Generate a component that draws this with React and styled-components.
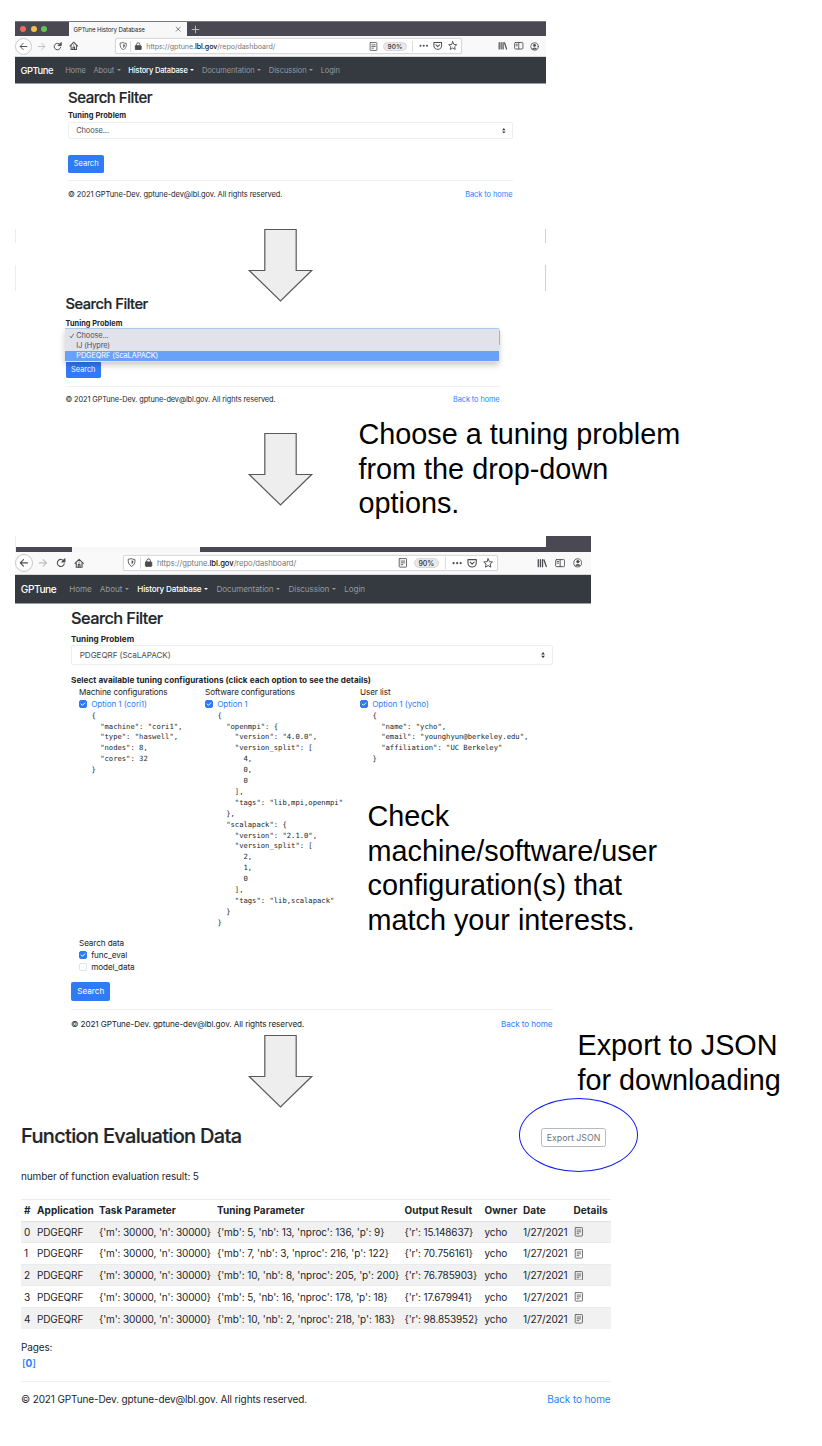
import React from 'react';
import styled, { createGlobalStyle, css } from 'styled-components';

const Global = createGlobalStyle`
  * { box-sizing: border-box; }
  body { margin: 0; background: #fff; }
`;
const Page = styled.main`
  position: relative; width: 822px; height: 1446px; overflow: hidden; padding-top: 21px;
  font-family: Inter, "Liberation Sans", sans-serif; color: #212529; background: #fff;
`;
const Stage = styled.section`
  height: ${p => p.$h}px;
`;

/* ---------- browser window ---------- */
const Browser = styled.div`
  margin-left: 15px; width: ${p => p.$w}px; font-size: ${p => p.$em}px;
`;
const TabStrip = styled.div`
  display: flex; height: 15px; background: #4a4852; border-top: 1px solid #77757d; padding-left: 5px; align-items: center;
`;
const Lights = styled.div`display: flex; gap: 4.6px; width: 49px;`;
const Light = styled.i`width: 6px; height: 6px; border-radius: 50%; background: ${p => p.$c};`;
const Tab = styled.div`
  display: flex; align-items: center; justify-content: space-between; width: 117.5px; height: 14px; padding: 0 5px 0 4.5px;
  background: #f8f8f9; font-size: 6.1px; letter-spacing: -.02em; color: #222; white-space: nowrap;
`;
const NewTab = styled.div`margin-left: 4px; display: flex;`;
const CutStrip = styled.div`
  display: grid; grid-template-columns: 56px 128px 346px 45px; height: 16px; align-items: end; border-left: 1px solid #eee;
`;
const CutPart = styled.i`height: ${p => p.$h}px; background: ${p => (p.$light ? '#f8f8f9' : '#4a4852')};`;
const Toolbar = styled.div`
  display: flex; align-items: center; height: 2.13em; background: #f9f9fa; border-bottom: 1px solid #d8d8da;
`;
const Back = styled.div`
  display: grid; place-items: center; width: 1.7em; height: 1.7em; border: 1px solid #c9c9cb; border-radius: 50%; background: #fff;
`;
const NavIcons = styled.div`display: flex; align-items: center; gap: .72em; margin-left: .45em; width: 7.8em;`;
const Url = styled.div`
  display: flex; align-items: center; width: 34.7em; height: 1.55em; padding: 0 .35em 0 .33em; border: 1px solid #dadadc; border-radius: 2px; background: #fff;
  box-shadow: 0 0 1px #ccc; color: #77777b;
`;
const UrlText = styled.span`
  font-size: .71em; letter-spacing: -.008em; margin-left: .5em; flex: 1; white-space: nowrap;
  b { font-weight: 500; color: #111; }
`;
const Divider = styled.i`width: 1px; height: 1.1em; background: #ddd; margin: 0 ${p => p.$m}em;`;
const Pill = styled.span`
  display: grid; place-items: center; width: 3.55em; height: 1.35em; margin-left: .85em; border-radius: 1em; background: #e9e9eb; border: 1px solid #d8d8da;
  font-size: .65em; font-weight: 500; color: #333;
`;
const UrlActions = styled.div`display: flex; align-items: center; gap: .5em;`;
const RightIcons = styled.div`display: flex; align-items: center; gap: .68em; margin-left: auto; margin-right: ${p => p.$r}em;`;
const Svg = styled.svg`
  width: ${p => p.$s || 1}em; height: ${p => p.$s || 1}em; display: block; flex: none;
  fill: none; stroke: ${p => p.$c || '#4c4c50'}; stroke-width: ${p => p.$k || 1.7}; stroke-linecap: round; stroke-linejoin: round;
`;
const Navbar = styled.nav`
  display: flex; align-items: center; height: 2.7em; padding-left: .54em; background: #343a40; border-bottom: 1px solid #9a9da0; color: #97999d;
`;
const Brand = styled.span`font-size: .94em; font-weight: 500; color: #fff; width: 4.76em; letter-spacing: -.045em;`;
const NavItem = styled.span`
  display: flex; align-items: center; font-size: .75em; margin-right: 1.02em; white-space: nowrap; letter-spacing: -.012em;
  ${p => p.$active && css`color: #fff; font-weight: 500; letter-spacing: -.02em;`}
`;
const Caret = styled.i`
  margin-left: .34em; border: .27em solid transparent; border-top-color: currentColor; border-bottom: 0;
`;

const I = {
  back: <path d="M14 8H2.5M7.5 2.5 2 8l5.5 5.5" />,
  fwd: <path d="M2 8h11.5M8.5 2.5 14 8l-5.5 5.5" />,
  reload: <><path d="M13.3 9.5A5.7 5.7 0 1 1 12.5 4.7" /><path d="M14.3 1.5v4.8H9.5z" fill="#4c4c50" /></>,
  home: <><path d="M1.5 8.5 8 2l6.5 6.5" /><path d="M3.5 8v6.3h9V8" /><path d="M6.7 14v-4h2.6v4M8 6.3v.4" /></>,
  shield: <><path d="M8 1.3 14 3c0 6-1.5 9.5-6 11.7C3.5 12.5 2 9 2 3z" /><path d="M8 4.3v7.2c2-1.5 2.9-3.5 3.1-6.5z" fill="#4c4c50" stroke="none" /></>,
  lock: <><rect x="2.5" y="7" width="11" height="7.5" rx="1" fill="#4c4c50" /><path d="M4.8 7V4.8a3.2 3.2 0 0 1 6.4 0V7" /></>,
  reader: <><rect x="2" y="1" width="12" height="14" rx="1" /><path d="M5 5h6M5 8h6M5 11h3" /></>,
  dots: <g fill="#4c4c50" stroke="none"><circle cx="2.5" cy="8" r="1.7" /><circle cx="8" cy="8" r="1.7" /><circle cx="13.5" cy="8" r="1.7" /></g>,
  pocket: <><path d="M1.5 2.5h13v5a6.5 6.5 0 0 1-13 0z" /><path d="m5 6.5 3 3 3-3" /></>,
  star: <path d="m8 1.3 2 4.4 4.8.5-3.6 3.2 1 4.8L8 11.8l-4.2 2.4 1-4.8L1.2 6.2 6 5.7z" />,
  library: <path d="M2 2.5v11M5.3 2.5v11M8.6 2.5v11M11 3l3.5 10.5" strokeWidth="2" />,
  sidebar: <><rect x="1" y="2.5" width="14" height="11" rx="1.5" /><path d="M8 2.5v11M3.5 5.5h2M3.5 8h2" /></>,
  account: <><circle cx="8" cy="8" r="6.7" /><circle cx="8" cy="6" r="2" fill="#4c4c50" /><path d="M4.5 12c.5-2 6.5-2 7 0z" fill="#4c4c50" /></>,
  plus: <path d="M8 2v12M2 8h12" />,
  close: <path d="m3 3 10 10M13 3 3 13" />,
};
const Icon = ({ n, s, c, k }) => <Svg viewBox="0 0 16 16" $s={s} $c={c} $k={k}>{I[n]}</Svg>;

const Chrome = ({ right }) => (
  <Toolbar>
    <Back><Icon n="back" s={0.9} /></Back>
    <NavIcons>
      <Icon n="fwd" s={0.9} c="#bbb" /><Icon n="reload" s={0.92} /><Icon n="home" s={0.95} />
    </NavIcons>
    <Url>
      <Icon n="shield" s={0.85} k={1.5} /><Divider $m={0.3} /><Icon n="lock" s={0.85} />
      <UrlText>https://gptune.<b>lbl.gov</b>/repo/dashboard/</UrlText>
      <Icon n="reader" s={0.9} k={1.4} />
      <Pill>90%</Pill>
      <Divider $m={0.55} />
      <UrlActions><Icon n="dots" s={0.95} /><Icon n="pocket" s={0.95} /><Icon n="star" s={0.95} k={1.5} /></UrlActions>
    </Url>
    <RightIcons $r={right}><Icon n="library" s={0.95} /><Icon n="sidebar" s={0.95} k={1.4} /><Icon n="account" s={0.9} k={1.4} /></RightIcons>
  </Toolbar>
);
const SiteNav = () => (
  <Navbar>
    <Brand>GPTune</Brand>
    <NavItem>Home</NavItem>
    <NavItem>About<Caret /></NavItem>
    <NavItem $active>History Database<Caret /></NavItem>
    <NavItem>Documentation<Caret /></NavItem>
    <NavItem>Discussion<Caret /></NavItem>
    <NavItem>Login</NavItem>
  </Navbar>
);

/* ---------- dashboard page ---------- */
const Body = styled.div`
  margin-left: ${p => p.$x}px; width: ${p => p.$w}px; padding-top: ${p => p.$pt}px; font-size: ${p => p.$em}px; line-height: 1.5;
  letter-spacing: -.0125em;
`;
const Title = styled.h2`
  margin: 0 0 .25em; font-size: 2em; line-height: 1.2; font-weight: 500; white-space: nowrap; letter-spacing: -.0335em;
  -webkit-text-stroke: .2px currentColor;
`;
const Bold = styled.div`font-weight: 700; white-space: nowrap; letter-spacing: .007em; margin-top: ${p => p.$mt || 0}px;`;
const Select = styled.div`
  position: relative; display: flex; align-items: center; justify-content: space-between; height: 2.375em; padding: 0 .6em 0 .95em;
  border: 1px solid ${p => (p.$focus ? '#9cc8f5' : '#eceef0')}; border-radius: .25em; color: #495057;
`;
const Menu = styled.div`
  position: absolute; left: -1.5px; top: -2px; width: calc(100% + 1.5px); padding: 2px 0 1.5px; background: #e2e2ea; border-top: 1px solid #a9c9ec;
  box-shadow: 0 3px 6px rgba(0,0,0,.22); z-index: 1;
`;
const MenuItem = styled.div`
  display: flex; align-items: center; height: 10px; white-space: nowrap;
  ${p => p.$on && css`background: #6aa1f8; color: #fff;`}
`;
const Tick = styled.span`width: 11.3px; padding-left: 3.5px; display: flex;`;
const Button = styled.button`
  display: block; height: 2.375em; padding: 0 .76em; margin-top: ${p => p.$mt}em; border: 0; border-radius: .25em;
  background: #2f7bf6; color: #fff; font: inherit;
`;
const Rule = styled.hr`margin: 1em 0; border: 0; border-top: 1px solid #f0f0f0;`;
const FootRow = styled.footer`display: flex; justify-content: space-between; white-space: nowrap;`;
const Link = styled.span`color: #2a7fff;`;
const Updown = () => (
  <Svg viewBox="0 0 8 10" $s={0.75}><path d="M4 0 7 4H1zM4 10 1 6h6z" fill="#343a40" stroke="none" /></Svg>
);
const Footer = () => (
  <><Rule /><FootRow><span>© 2021 GPTune-Dev. gptune-dev@lbl.gov. All rights reserved.</span><Link>Back to home</Link></FootRow></>
);

const Configs = styled.div`display: grid; grid-template-columns: 126px 155px 1fr; padding-left: 8px; white-space: nowrap;`;
const Option = styled.div`display: flex; align-items: center; color: ${p => (p.$plain ? 'inherit' : '#2a7fff')};`;
const Check = styled.i`
  display: grid; place-items: center; width: 8px; height: 8px; margin-right: 4.2px; border-radius: 2px; font-size: 6px;
  background: ${p => (p.$on ? '#2f7bf6' : '#fff')}; border: 1px solid ${p => (p.$on ? '#2f7bf6' : '#dfe2e6')};
`;
const Json = styled.pre`
  margin: 0 0 1.1em 12.5px; font-family: "DejaVu Sans Mono", monospace; font-size: 7.2px; line-height: 10.9px; letter-spacing: 0;
`;
const SearchData = styled.div`padding-left: 8px;`;
const Box = ({ on }) => (
  <Check $on={on}>{on && <Svg viewBox="0 0 16 16" $c="#fff" $k={2.5}><path d="m3 8 3.5 3.5L13 5" /></Svg>}</Check>
);
const machine = `{
  "machine": "cori1",
  "type": "haswell",
  "nodes": 8,
  "cores": 32
}`;
const software = `{
  "openmpi": {
    "version": "4.0.0",
    "version_split": [
      4,
      0,
      0
    ],
    "tags": "lib,mpi,openmpi"
  },
  "scalapack": {
    "version": "2.1.0",
    "version_split": [
      2,
      1,
      0
    ],
    "tags": "lib,scalapack"
  }
}`;
const user = `{
  "name": "ycho",
  "email": "younghyun@berkeley.edu",
  "affiliation": "UC Berkeley"
}`;

/* ---------- results ---------- */
const ResultHead = styled.div`
  display: flex; justify-content: space-between; align-items: center; height: 24px; padding: 0 4.5px 0 0;
  ${Title} { margin: 0; }
`;
const Export = styled.button`
  height: 19.5px; width: 65px; padding: 0; margin-top: 3px; border: 1px solid #b5babf; border-radius: 2.5px; background: #fff;
  color: #6c757d; font: inherit; font-size: 8.8px; white-space: nowrap;
`;
const Count = styled.div`margin: 20.5px 0 15px;`;
const Table = styled.table`
  width: 589.5px; border-collapse: collapse; table-layout: fixed; white-space: nowrap;
  th { text-align: left; font-weight: 700; letter-spacing: .006em; height: 22px; padding: 0 3px; border-top: 1px solid #e9ecef; border-bottom: 1.5px solid #dee2e6; }
  td { height: 21.65px; padding: 1px 3px 0; border-top: 1px solid #e9ecef; }
  td:nth-child(4) { letter-spacing: -.007em; }
  tbody tr:nth-child(odd) { background: #f1f1f1; }
`;
const Pages = styled.div`margin-top: 9.5px; line-height: 16px;`;
const PageNo = styled.div`color: #2a7fff; padding-left: 1px; font-weight: 500; b { font-weight: 700; }`;
const cols = [13, 62, 118, 187.5, 80, 38.5, 50.5, 40];
const heads = ['#', 'Application', 'Task Parameter', 'Tuning Parameter', 'Output Result', 'Owner', 'Date', 'Details'];
const rows = [
  ["{'mb': 5, 'nb': 13, 'nproc': 136, 'p': 9}", "{'r': 15.148637}"],
  ["{'mb': 7, 'nb': 3, 'nproc': 216, 'p': 122}", "{'r': 70.756161}"],
  ["{'mb': 10, 'nb': 8, 'nproc': 205, 'p': 200}", "{'r': 76.785903}"],
  ["{'mb': 5, 'nb': 16, 'nproc': 178, 'p': 18}", "{'r': 17.679941}"],
  ["{'mb': 10, 'nb': 2, 'nproc': 218, 'p': 183}", "{'r': 98.853952}"],
];

/* ---------- annotations laid over the stages ---------- */
const ArrowSvg = styled.svg`position: absolute; left: 247px; top: ${p => p.$y}px; width: 67px; height: 75px; z-index: 2;`;
const Arrow = ({ y }) => (
  <ArrowSvg $y={y} viewBox="0 0 67 75"><path d="M17.8 1.5H49.2V42.5H64.7L33.5 73 2.3 42.5H17.8Z" fill="#eee" stroke="#595959" strokeWidth="1.2" /></ArrowSvg>
);
const Note = styled.p`
  position: absolute; left: ${p => p.$x}px; top: ${p => p.$y}px; margin: 0; z-index: 2; white-space: pre;
  font: 28.8px/34.6px "Liberation Sans", Arial, sans-serif; color: #000;
`;
const Ring = styled.i`
  position: absolute; left: 518.5px; top: 1098px; width: 119px; height: 73.5px; border: 1.4px solid #0d1cf0; border-radius: 50%; z-index: 2;
`;
const EdgeMarks = styled.div`
  position: absolute; left: 15px; top: ${p => p.$y}px; width: 531px; height: ${p => p.$h}px; border-left: 1px solid #ededed; border-right: 1px solid #cfcfcf;
`;

export default function App() {
  return (
    <Page>
      <Global />
      <Stage $h={274}>
        <Browser $w={531} $em={10}>
          <TabStrip>
            <Lights><Light $c="#ee6a5f" /><Light $c="#f5be4f" /><Light $c="#5fc454" /></Lights>
            <Tab>GPTune History Database<Icon n="close" s={1.05} /></Tab>
            <NewTab><Icon n="plus" s={0.9} c="#ddd" k={1.3} /></NewTab>
          </TabStrip>
          <Chrome right={0.66} />
          <SiteNav />
        </Browser>
        <Body $x={68} $w={444.5} $pt={4.3} $em={7.5}>
          <Title>Search Filter</Title>
          <Bold>Tuning Problem</Bold>
          <Select>Choose...<Updown /></Select>
          <Button $mt={2.1}>Search</Button>
          <Footer />
        </Body>
      </Stage>
      <Stage $h={241}>
        <Body $x={65.5} $w={434} $pt={1.4} $em={7.35}>
          <Title>Search Filter</Title>
          <Bold>Tuning Problem</Bold>
          <Select $focus>
            <Menu>
              <MenuItem><Tick><Svg viewBox="0 0 16 16" $s={0.8} $k={1.9}><path d="m3 9 3 4.5L13 2" /></Svg></Tick>Choose...</MenuItem>
              <MenuItem><Tick />IJ (Hypre)</MenuItem>
              <MenuItem $on><Tick />PDGEQRF (ScaLAPACK)</MenuItem>
            </Menu>
          </Select>
          <Button $mt={2}>Search</Button>
          <Footer />
        </Body>
      </Stage>
      <Stage $h={588}>
        <Browser $w={576} $em={10.82}>
          <CutStrip><CutPart $h={5} /><CutPart $h={5} $light /><CutPart $h={5} /><CutPart $h={16} /></CutStrip>
          <Chrome right={0.8} />
          <SiteNav />
        </Browser>
        <Body $x={71} $w={481.5} $pt={5.1} $em={8.17}>
          <Title>Search Filter</Title>
          <Bold>Tuning Problem</Bold>
          <Select>PDGEQRF (ScaLAPACK)<Updown /></Select>
          <Bold $mt={9.2}>Select available tuning configurations (click each option to see the details)</Bold>
          <Configs>
            <div>Machine configurations<Option><Box on />Option 1 (cori1)</Option><Json>{machine}</Json></div>
            <div>Software configurations<Option><Box on />Option 1</Option><Json>{software}</Json></div>
            <div>User list<Option><Box on />Option 1 (ycho)</Option><Json>{user}</Json></div>
          </Configs>
          <SearchData>
            Search data
            <Option $plain><Box on />func_eval</Option>
            <Option $plain><Box />model_data</Option>
          </SearchData>
          <Button $mt={1}>Search</Button>
          <Footer />
        </Body>
      </Stage>
      <Stage $h={320}>
        <Body $x={21} $w={589.5} $pt={0} $em={10}>
          <ResultHead><Title>Function Evaluation Data</Title><Export>Export JSON</Export></ResultHead>
          <Count>number of function evaluation result: 5</Count>
          <Table>
            <colgroup>{cols.map((w, i) => <col key={i} width={w} />)}</colgroup>
            <thead><tr>{heads.map(h => <th key={h}>{h}</th>)}</tr></thead>
            <tbody>
              {rows.map(([tuning, result], i) => (
                <tr key={i}>
                  <td>{i}</td><td>PDGEQRF</td><td>{"{'m': 30000, 'n': 30000}"}</td><td>{tuning}</td><td>{result}</td><td>ycho</td><td>1/27/2021</td>
                  <td><Icon n="reader" s={0.97} k={1.3} /></td>
                </tr>
              ))}
            </tbody>
          </Table>
          <Pages>Pages:<PageNo>[<b>0</b>]</PageNo></Pages>
          <Footer />
        </Body>
      </Stage>
      <EdgeMarks $y={229} $h={14} /><EdgeMarks $y={265} $h={26} />
      <Arrow y={228} /><Arrow y={431.5} /><Arrow y={1034} />
      <Note $x={358.5} $y={417}>{'Choose a tuning problem\nfrom the drop-down\noptions.'}</Note>
      <Note $x={367.5} $y={799}>{'Check\nmachine/software/user\nconfiguration(s) that\nmatch your interests.'}</Note>
      <Note $x={577.5} $y={1028}>{'Export to JSON\nfor downloading'}</Note>
      <Ring />
    </Page>
  );
}
